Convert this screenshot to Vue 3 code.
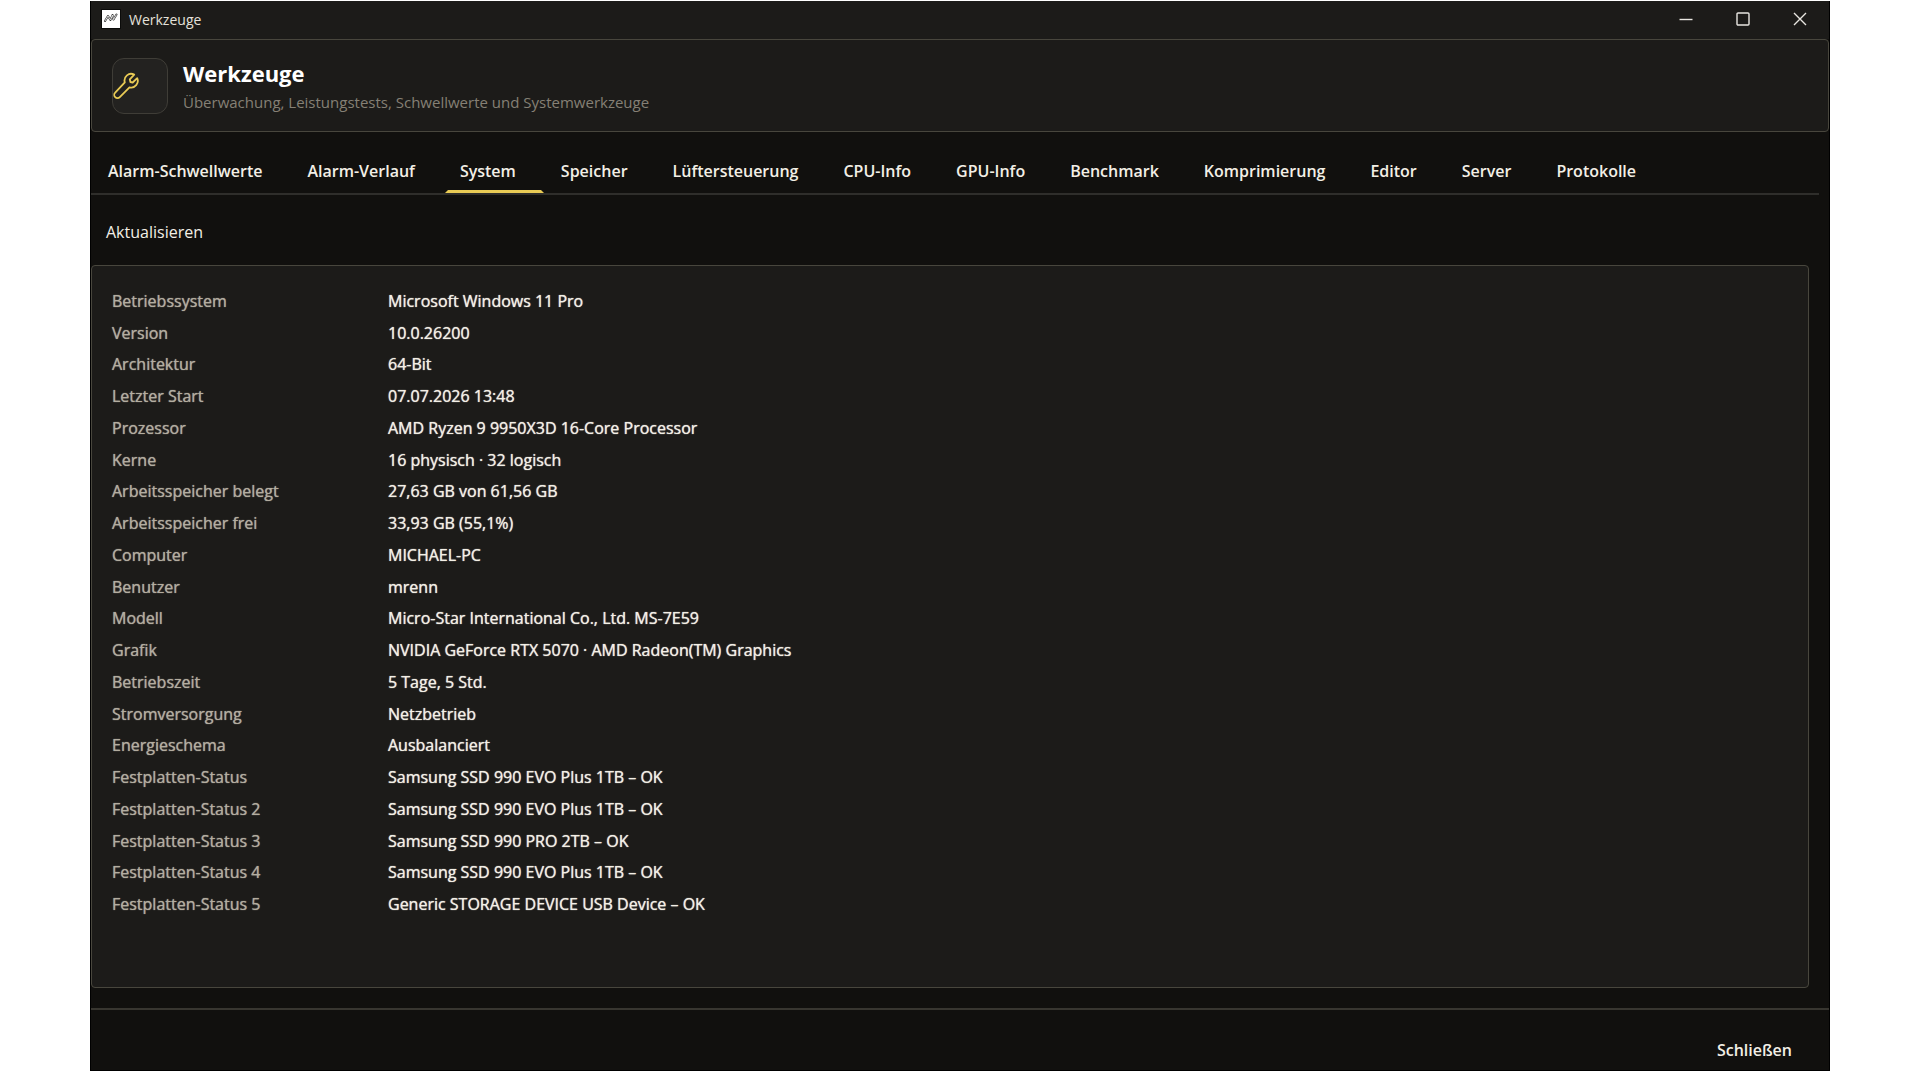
<template>
  <div class="desktop">
    <div class="window">
      <div class="titlebar">
        <svg class="app-icon" viewBox="0 0 20 20" aria-hidden="true">
          <rect width="20" height="20" fill="#0b0b0a" />
          <rect x="1" y="1" width="18" height="18" fill="#fff" />
          <path d="M4 12 7 7 9.500 11 11.500 6 12.500 10.500 15.500 5.500" fill="none" stroke="#333" stroke-width="2" stroke-linejoin="round" stroke-linecap="round" />
          <path d="M4 12 7 7 9.500 11 11.500 6 12.500 10.500 15.500 5.500" fill="none" stroke="#eee" stroke-width="0.900" />
        </svg>
        <span class="titlebar-text">Werkzeuge</span>
        <div class="controls">
          <button type="button" aria-label="Minimieren">
            <svg viewBox="0 0 16 16"><path d="M1.500 8.500h13" /></svg>
          </button>
          <button type="button" aria-label="Maximieren">
            <svg viewBox="0 0 16 16"><rect x="2" y="2" width="12" height="12" rx="1" /></svg>
          </button>
          <button type="button" aria-label="Fenster schließen">
            <svg viewBox="0 0 16 16"><path d="M2 2l12 12M14 2L2 14" /></svg>
          </button>
        </div>
      </div>

      <header class="header">
        <div class="header-icon">
          <svg viewBox="0 0 26 28" aria-hidden="true">
            <path d="M21.200 2.600A6.600 6.600 0 0 0 11.800 10.300L2.200 20.600a3.200 3.200 0 0 0 4.600 4.600l9.700-9.900A6.600 6.600 0 0 0 24.200 6.200l-4.500 4.300-2.300-.5-.6-2.600z" />
          </svg>
        </div>
        <div class="header-text">
          <h1>Werkzeuge</h1>
          <p>Überwachung, Leistungstests, Schwellwerte und Systemwerkzeuge</p>
        </div>
      </header>

      <nav class="tabs" role="tablist">
        <button
          v-for="tab in tabs"
          :key="tab"
          type="button"
          role="tab"
          class="tab"
          :class="{ active: tab === activeTab }"
          :aria-selected="tab === activeTab"
          @click="activeTab = tab"
        >
          {{ tab }}
        </button>
      </nav>

      <div class="toolbar">
        <button type="button" class="refresh">Aktualisieren</button>
      </div>

      <main class="panel">
        <dl>
          <div v-for="[label, value] in rows" :key="label" class="row">
            <dt>{{ label }}</dt>
            <dd>{{ value }}</dd>
          </div>
        </dl>
      </main>

      <footer class="footer">
        <button type="button" class="close">Schließen</button>
      </footer>
    </div>
  </div>
</template>

<script setup>
import { ref } from 'vue'

const tabs = [
  'Alarm-Schwellwerte',
  'Alarm-Verlauf',
  'System',
  'Speicher',
  'Lüftersteuerung',
  'CPU-Info',
  'GPU-Info',
  'Benchmark',
  'Komprimierung',
  'Editor',
  'Server',
  'Protokolle',
]

const activeTab = ref('System')

const rows = [
  ['Betriebssystem', 'Microsoft Windows 11 Pro'],
  ['Version', '10.0.26200'],
  ['Architektur', '64-Bit'],
  ['Letzter Start', '07.07.2026 13:48'],
  ['Prozessor', 'AMD Ryzen 9 9950X3D 16-Core Processor'],
  ['Kerne', '16 physisch · 32 logisch'],
  ['Arbeitsspeicher belegt', '27,63 GB von 61,56 GB'],
  ['Arbeitsspeicher frei', '33,93 GB (55,1%)'],
  ['Computer', 'MICHAEL-PC'],
  ['Benutzer', 'mrenn'],
  ['Modell', 'Micro-Star International Co., Ltd. MS-7E59'],
  ['Grafik', 'NVIDIA GeForce RTX 5070 · AMD Radeon(TM) Graphics'],
  ['Betriebszeit', '5 Tage, 5 Std.'],
  ['Stromversorgung', 'Netzbetrieb'],
  ['Energieschema', 'Ausbalanciert'],
  ['Festplatten-Status', 'Samsung SSD 990 EVO Plus 1TB – OK'],
  ['Festplatten-Status 2', 'Samsung SSD 990 EVO Plus 1TB – OK'],
  ['Festplatten-Status 3', 'Samsung SSD 990 PRO 2TB – OK'],
  ['Festplatten-Status 4', 'Samsung SSD 990 EVO Plus 1TB – OK'],
  ['Festplatten-Status 5', 'Generic STORAGE DEVICE USB Device – OK'],
]
</script>

<style>
body {
  background: #fff;
}
</style>

<style scoped>
.desktop {
  box-sizing: border-box;
  display: flex;
  min-height: 100vh;
  padding: 1px 90px 9px;
  font-family: 'Open Sans', 'Noto Sans', sans-serif;
  font-size: 16px;
  color: #f3efe6;
}

.window {
  box-sizing: border-box;
  display: flex;
  flex: 1;
  flex-direction: column;
  min-width: 0;
  border: 1px solid #000;
  border-top: 0;
  background: #11100e;
}

button {
  padding: 0;
  border: 0;
  background: none;
  color: inherit;
  font: inherit;
  cursor: pointer;
}

.titlebar {
  box-sizing: border-box;
  display: flex;
  align-items: center;
  height: 38px;
  padding: 0 1px 2px 10px;
  background: #1c1b19;
}

.app-icon {
  width: 20px;
  height: 20px;
}

.titlebar-text {
  margin-left: 8px;
  font-size: 14px;
  color: #e4e1da;
}

.controls {
  display: flex;
  align-self: stretch;
  margin-left: auto;
}

.controls button {
  display: flex;
  align-items: center;
  justify-content: center;
  width: 57px;
}

.controls svg {
  width: 16px;
  height: 16px;
  fill: none;
  stroke: #e8e6e1;
  stroke-width: 1.4;
}

.header {
  box-sizing: border-box;
  display: flex;
  align-items: center;
  gap: 15px;
  height: 93px;
  padding: 0 20px;
  border: 1px solid #48463d;
  border-radius: 4px;
  background: #1c1b19;
}

.header-icon {
  box-sizing: border-box;
  display: flex;
  align-items: center;
  width: 56px;
  height: 56px;
  border: 1px solid #3f3d37;
  border-radius: 12px;
  background: #232220;
}

.header-icon svg {
  width: 26px;
  height: 28px;
  fill: none;
  stroke: #e9cb55;
  stroke-width: 1.8;
  stroke-linejoin: round;
}

.header-text {
  padding-top: 4px;
}

h1 {
  margin: 0;
  font-size: 22px;
  font-weight: 700;
  line-height: 28px;
  color: #fff;
}

p {
  margin: 0;
  font-size: 15px;
  line-height: 30px;
  color: #858075;
}

.tabs {
  display: flex;
  gap: 2px;
  height: 61px;
  margin-right: 10px;
  padding-left: 2px;
  border-bottom: 2px solid #2f2e2b;
}

/* side borders stay transparent so the underline gets bevelled ends */
.tab {
  display: flex;
  align-items: flex-end;
  padding: 0 25px 8px 12px;
  border: 3px solid transparent;
  font-weight: 600;
  white-space: nowrap;
}

.tab.active {
  border-bottom-color: #e9cb55;
}

.toolbar {
  box-sizing: border-box;
  display: flex;
  align-items: center;
  height: 70px;
  padding: 4px 15px 0;
}

.panel {
  box-sizing: border-box;
  display: flex;
  flex: 1;
  margin-right: 20px;
  padding: 19px 20px 67px;
  border: 1px solid #48463d;
  border-radius: 4px;
  background: #1c1b19;
}

dl {
  display: grid;
  flex: 1;
  grid-auto-rows: 1fr;
  margin: 0;
}

.row {
  display: grid;
  grid-template-columns: 276px 1fr;
  align-items: center;
  line-height: 24px;
  text-shadow: 0 0 1px currentColor;
}

dt {
  color: #b3ada0;
}

dd {
  margin: 0;
}

.footer {
  display: flex;
  align-items: center;
  justify-content: flex-end;
  height: 60px;
  margin-top: 20px;
  padding-right: 37px;
  border-top: 2px solid #383630;
}

.close {
  padding-top: 20px;
  font-weight: 600;
}
</style>
